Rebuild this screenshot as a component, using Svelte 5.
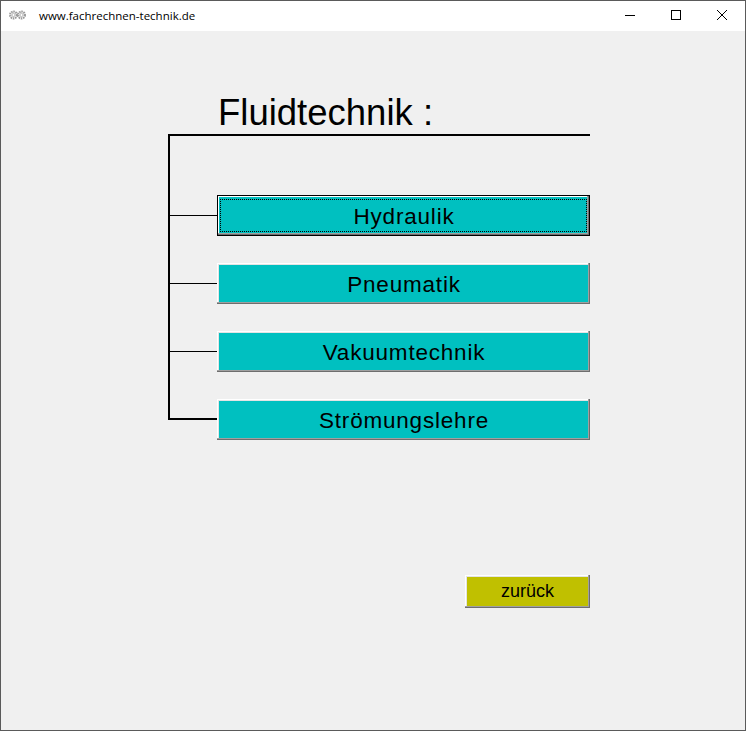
<script>
  const items = ['Hydraulik', 'Pneumatik', 'Vakuumtechnik', 'Strömungslehre'];
</script>

<div class="window">
  <header class="titlebar">
    <svg class="appicon" width="17" height="10" viewBox="0 0 17 10" fill="none">
      <circle cx="4.5" cy="5" r="3.4" stroke="#9a9a9a" stroke-width="2.2" stroke-dasharray="1.5 0.7" />
      <circle cx="12.5" cy="5" r="3.4" stroke="#9a9a9a" stroke-width="2.2" stroke-dasharray="1.5 0.7" />
      <circle cx="4.5" cy="5" r="1.6" stroke="#b4b4b4" stroke-width="1" />
      <circle cx="12.5" cy="5" r="1.6" stroke="#b4b4b4" stroke-width="1" />
    </svg>
    <span class="title">www.fachrechnen-technik.de</span>
    <div class="controls">
      <span class="ctl">
        <svg width="10" height="10" viewBox="0 0 10 10"><path d="M0 5.5H10" stroke="#000" fill="none" /></svg>
      </span>
      <span class="ctl">
        <svg width="10" height="10" viewBox="0 0 10 10"><rect x="0.5" y="0.5" width="9" height="9" stroke="#000" fill="none" /></svg>
      </span>
      <span class="ctl">
        <svg width="10" height="10" viewBox="0 0 10 10"><path d="M0 0L10 10M10 0L0 10" stroke="#000" stroke-width="1" fill="none" /></svg>
      </span>
    </div>
  </header>

  <main class="content">
    <h1>Fluidtechnik :</h1>
    <div class="tree">
      {#each items as item, i}
        <div class="row">
          <span class="branch" class:last={i === items.length - 1}></span>
          <button class="btn" class:focused={i === 0}><span class="label">{item}</span></button>
        </div>
      {/each}
    </div>
    <div class="footer">
      <button class="btn back">zurück</button>
    </div>
  </main>
</div>

<style>
  :global(body) {
    margin: 0;
    background: #f0f0f0;
  }
  .window {
    box-sizing: border-box;
    width: 746px;
    height: 731px;
    border: 1px solid #5a5a5a;
    background: #f0f0f0;
    font-family: "Liberation Sans", Arial, sans-serif;
    color: #000;
    overflow: hidden;
  }
  .titlebar {
    box-sizing: border-box;
    display: flex;
    align-items: center;
    height: 30px;
    background: #fff;
    padding: 0 0 2px 8px;
  }
  .appicon {
    flex: none;
  }
  .title {
    margin: 0 0 0 13px;
    font-family: "Open Sans", "Noto Sans", sans-serif;
    font-size: 11.5px;
    white-space: nowrap;
  }
  .controls {
    display: flex;
    margin-left: auto;
    align-self: stretch;
  }
  .ctl {
    width: 46px;
    display: flex;
    align-items: center;
    justify-content: center;
  }
  .content {
    padding-left: 167px;
    width: 423px;
  }
  h1 {
    margin: 0;
    padding: 60px 0 0 50px;
    height: 43px;
    font-size: 36.5px;
    line-height: 44px;
    font-weight: 400;
    white-space: nowrap;
  }
  .tree {
    box-sizing: border-box;
    width: 422px;
    height: 286px;
    border-top: 2px solid #000;
    border-left: 2px solid #000;
    padding-top: 59px;
    display: flex;
    flex-direction: column;
    gap: 27px;
  }
  .row {
    display: flex;
    flex: none;
    height: 41px;
  }
  .branch {
    flex: none;
    width: 47px;
    height: 1px;
    margin-top: 20px;
    background: #000;
  }
  .branch.last {
    height: 2px;
    margin-top: 19px;
  }
  .btn {
    box-sizing: border-box;
    flex: none;
    width: 373px;
    height: 41px;
    padding: 2px 0 0 1px;
    border: 0;
    border-radius: 0;
    background: #00c0c0;
    color: #000;
    font-family: "Liberation Sans", Arial, sans-serif;
    font-size: 22.5px;
    letter-spacing: 0.8px;
    box-shadow: inset -1px -1px 0 #6e6e6e, inset -2px -2px 0 #a0a0a0, inset 1px 1px 0 #fff, inset 2px 2px 0 #e4e4e4;
  }
  .btn.focused {
    outline: 1px solid #000;
    outline-offset: -1px;
    box-shadow: inset -2px -2px 0 #6e6e6e, inset -3px -3px 0 #a0a0a0, inset 2px 2px 0 #fff;
    position: relative;
  }
  .btn.focused .label::after {
    content: "";
    position: absolute;
    inset: 4px 3px;
    border: 1px dotted #000;
  }
  .footer {
    display: flex;
    justify-content: flex-end;
    width: 422px;
    padding-top: 155px;
  }
  .btn.back {
    width: 125px;
    height: 33px;
    padding: 0;
    background: #c0c000;
    font-size: 18px;
    letter-spacing: 0;
  }
</style>
